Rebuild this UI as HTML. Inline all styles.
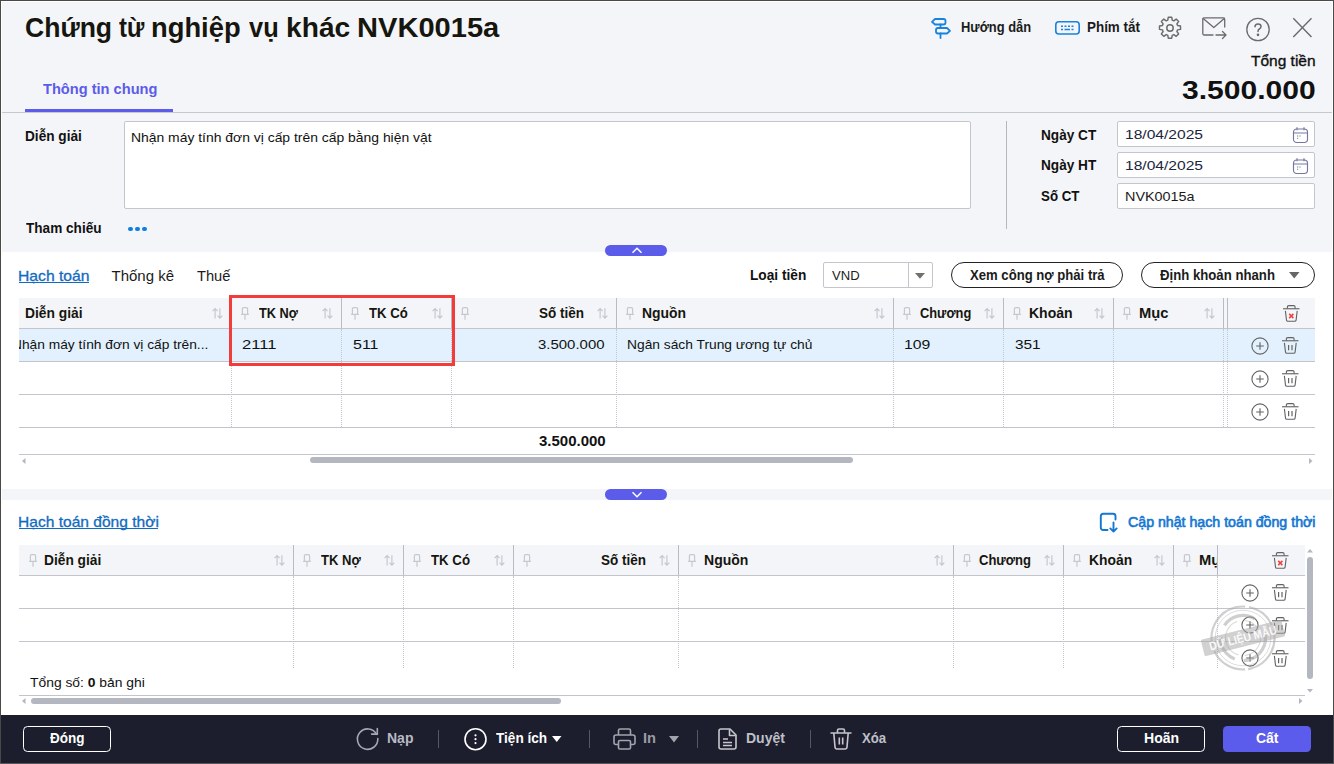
<!DOCTYPE html><html><head><meta charset="utf-8"><title>Chứng từ nghiệp vụ khác</title><style>
*{box-sizing:border-box;margin:0;padding:0}
html,body{width:1334px;height:764px;overflow:hidden;background:#f4f5f9;font-family:"Liberation Sans",sans-serif;color:#111}
.a{position:absolute;white-space:nowrap}
.t{position:absolute;white-space:nowrap;line-height:1}
.inp{position:absolute;background:#fff;border:1px solid #c4c6cc;border-radius:2px}
.vl{position:absolute;width:1px;background:#b9bbc3}
.vd{position:absolute;width:0;border-left:1px dotted #c3c5cc}
.pill{position:absolute;height:26px;border:1px solid #222;border-radius:13px;background:#fff}
svg{position:absolute;overflow:visible}
</style></head><body>
<div class="t" style="left:24.76px;top:14.80px;font-size:26.8px;color:#16160f;font-weight:700;transform:scaleX(0.9912);transform-origin:0 50%;">Chứng</div>
<div class="t" style="left:119.28px;top:14.80px;font-size:26.8px;color:#16160f;font-weight:700;transform:scaleX(0.8929);transform-origin:0 50%;">từ</div>
<div class="t" style="left:151.46px;top:14.80px;font-size:26.8px;color:#16160f;font-weight:700;transform:scaleX(1.0206);transform-origin:0 50%;">nghiệp</div>
<div class="t" style="left:249.01px;top:14.80px;font-size:26.8px;color:#16160f;font-weight:700;transform:scaleX(0.9487);transform-origin:0 50%;">vụ</div>
<div class="t" style="left:286.41px;top:14.80px;font-size:26.8px;color:#16160f;font-weight:700;transform:scaleX(1.0513);transform-origin:0 50%;">khác</div>
<div class="t" style="left:357.10px;top:14.80px;font-size:26.8px;color:#16160f;font-weight:700;transform:scaleX(1.0849);transform-origin:0 50%;">NVK0015a</div>
<svg style="left:931px;top:18px" width="20" height="21" viewBox="0 0 20 21" fill="none" stroke="#1783dc" stroke-width="1.800" stroke-linejoin="round" stroke-linecap="round"><path d="M4 1H12.500Q14.500 1 14.500 3V4.500Q14.500 6.500 12.500 6.500H4L1 3.800Z"/><path d="M7 10H16L19 12.800L16 15.500H7Q5 15.500 5 13.500V12Q5 10 7 10Z"/><path d="M9.500 6.500V10M9.500 15.500V20"/></svg>
<div class="t" style="left:960.66px;top:20.90px;font-size:13.8px;color:#1b1b1b;font-weight:700;transform:scaleX(0.9352);transform-origin:0 50%;">Hướng dẫn</div>
<svg style="left:1055px;top:21px" width="25" height="14" viewBox="0 0 25 14" fill="none" stroke="#1783dc" stroke-width="1.600"><rect x=".8" y=".8" width="23.400" height="12.200" rx="3"/><path d="M6 5.300H8M9.500 5.300H11.500M13 5.300H15M16.500 5.300H18.500M6 8.600H8M9.500 8.600H15M16.500 8.600H18.500" stroke-width="1.500"/></svg>
<div class="t" style="left:1086.53px;top:20.80px;font-size:13.8px;color:#1b1b1b;font-weight:700;transform:scaleX(0.9718);transform-origin:0 50%;">Phím tắt</div>
<svg style="left:1158px;top:16px" width="24" height="24" viewBox="0 0 24 24" fill="none" stroke="#6b6b6b" stroke-width="1.450" stroke-linejoin="round"><circle cx="12" cy="12" r="3.200"/><path d="M10.300 1.200h3.400l.5 2.900 1.600.7 2.400-1.700 2.400 2.400-1.700 2.400.7 1.600 2.900.5v3.400l-2.900.5-.7 1.600 1.700 2.400-2.400 2.400-2.400-1.700-1.600.7-.5 2.900h-3.400l-.5-2.900-1.600-.7-2.400 1.700-2.400-2.400 1.700-2.400-.7-1.600-2.900-.5v-3.400l2.900-.5.7-1.600-1.700-2.400 2.400-2.400 2.400 1.700 1.600-.7z"/></svg>
<svg style="left:1202px;top:17px" width="25" height="23" viewBox="0 0 25 23" fill="none" stroke="#6b6b6b" stroke-width="1.300" stroke-linejoin="round" stroke-linecap="round"><path d="M11 18H2.200Q.8 18 .8 16.600V2.200Q.8 .8 2.200 .8H21.300Q22.700 .8 22.700 2.200V10"/><path d="M1.200 1.500L11.800 10.500L22.300 1.500"/><path d="M14 18H24M20.500 14.500L24 18L20.500 21.500"/></svg>
<svg style="left:1246px;top:17.500px" width="24" height="24" viewBox="0 0 24 24" fill="none" stroke="#6b6b6b" stroke-width="1.300" stroke-linecap="round"><circle cx="12" cy="11.500" r="11.200"/><path d="M9 8.800Q9 6 12 6Q15 6 15 8.500Q15 10.100 13.300 11Q12 11.700 12 13.500" stroke-width="1.500"/><circle cx="12" cy="16.800" r=".7" fill="#6b6b6b"/></svg>
<svg style="left:1293px;top:18px" width="19" height="19" viewBox="0 0 19 19" fill="none" stroke="#6b6b6b" stroke-width="1.400"><path d="M.3 .3L18.500 19M18.500 .3L.3 19"/></svg>
<div class="t" style="left:1250.99px;top:53.40px;font-size:15.2px;color:#111;-webkit-text-stroke:0.35px #111;transform:scaleX(1.0202);transform-origin:0 50%;">Tổng tiền</div>
<div class="t" style="left:1181.98px;top:77.30px;font-size:26.4px;color:#111;font-weight:700;transform:scaleX(1.1382);transform-origin:0 50%;">3.500.000</div>
<div class="t" style="left:42.76px;top:81.00px;font-size:15px;color:#5c5cea;font-weight:700;transform:scaleX(0.9742);transform-origin:0 50%;">Thông tin chung</div>
<div class="a" style="left:25px;top:109px;width:148px;height:3px;background:#5c5cea;"></div>
<div class="a" style="left:2px;top:112px;width:1330px;height:1px;background:#c6c8cc;"></div>
<div class="t" style="left:25.04px;top:129.10px;font-size:14.2px;color:#111;font-weight:700;transform:scaleX(0.9607);transform-origin:0 50%;">Diễn giải</div>
<div class="inp" style="left:124px;top:121px;width:847px;height:88px"></div>
<div class="t" style="left:130.95px;top:130.70px;font-size:13.2px;color:#111;transform:scaleX(1.0546);transform-origin:0 50%;">Nhận máy tính đơn vị cấp trên cấp bằng hiện vật</div>
<div class="t" style="left:25.76px;top:220.60px;font-size:14.2px;color:#111;font-weight:700;transform:scaleX(0.9582);transform-origin:0 50%;">Tham chiếu</div>
<div class="a" style="left:128px;top:226.800px;width:4.500px;height:4.500px;border-radius:50%;background:#0f7ee0"></div>
<div class="a" style="left:135px;top:226.800px;width:4.500px;height:4.500px;border-radius:50%;background:#0f7ee0"></div>
<div class="a" style="left:142px;top:226.800px;width:4.500px;height:4.500px;border-radius:50%;background:#0f7ee0"></div>
<div class="a" style="left:1006px;top:121px;width:1px;height:108px;background:#b5b7bf;"></div>
<div class="t" style="left:1040.79px;top:127.60px;font-size:14.2px;color:#111;font-weight:700;transform:scaleX(0.9602);transform-origin:0 50%;">Ngày CT</div>
<div class="inp" style="left:1117px;top:121px;width:198px;height:26px"></div>
<div class="t" style="left:1124.52px;top:128.00px;font-size:13.2px;color:#20243c;transform:scaleX(1.1822);transform-origin:0 50%;">18/04/2025</div>
<svg style="left:1293px;top:127px" width="15" height="16" viewBox="0 0 15 16" fill="none" stroke="#7478a0" stroke-width="1.150"><rect x=".5" y="2" width="14" height="13.500" rx="3.200"/><path d="M.5 6H14.500M4 .3V3.200M11 .3V3.200"/><path d="M4 9H5.200M6.400 9H7.600M4 11.300H5.200" stroke-width="1.100"/></svg>
<div class="t" style="left:1040.79px;top:158.35px;font-size:14.2px;color:#111;font-weight:700;transform:scaleX(0.9602);transform-origin:0 50%;">Ngày HT</div>
<div class="inp" style="left:1117px;top:152px;width:198px;height:26px"></div>
<div class="t" style="left:1124.52px;top:158.75px;font-size:13.2px;color:#20243c;transform:scaleX(1.1822);transform-origin:0 50%;">18/04/2025</div>
<svg style="left:1293px;top:158px" width="15" height="16" viewBox="0 0 15 16" fill="none" stroke="#7478a0" stroke-width="1.150"><rect x=".5" y="2" width="14" height="13.500" rx="3.200"/><path d="M.5 6H14.500M4 .3V3.200M11 .3V3.200"/><path d="M4 9H5.200M6.400 9H7.600M4 11.300H5.200" stroke-width="1.100"/></svg>
<div class="t" style="left:1041.28px;top:189.10px;font-size:14.2px;color:#111;font-weight:700;transform:scaleX(0.9379);transform-origin:0 50%;">Số CT</div>
<div class="inp" style="left:1117px;top:183px;width:198px;height:26px"></div>
<div class="t" style="left:1124.61px;top:189.50px;font-size:13.2px;color:#1a1a1a;transform:scaleX(1.0916);transform-origin:0 50%;">NVK0015a</div>
<div class="a" style="left:2px;top:252px;width:1330px;height:237px;background:#fff;"></div>
<div class="a" style="left:605px;top:245px;width:62px;height:11px;border-radius:5.500px;background:#5c5cea"></div>
<svg style="left:627px;top:245.3px" width="20" height="11" viewBox="0 0 20 11" fill="none" stroke="#fff" stroke-width="1.500"><path d="M5.500 7.800L10 3.300L14.500 7.800"/></svg>
<div class="t" style="left:18.19px;top:267.50px;font-size:15px;color:#126bc0;-webkit-text-stroke:0.3px #126bc0;transform:scaleX(1.0460);transform-origin:0 50%;">Hạch toán</div>
<div class="a" style="left:18.7px;top:282px;width:70.3px;height:1px;background:#126bc0;"></div>
<div class="t" style="left:111.50px;top:267.50px;font-size:15px;color:#1b1b1b;">Thống kê</div>
<div class="t" style="left:196.76px;top:267.50px;font-size:15px;color:#1b1b1b;transform:scaleX(0.9778);transform-origin:0 50%;">Thuế</div>
<div class="t" style="left:750.04px;top:267.90px;font-size:14.2px;color:#111;font-weight:700;transform:scaleX(0.9646);transform-origin:0 50%;">Loại tiền</div>
<div class="inp" style="left:823px;top:262px;width:110px;height:26px"></div>
<div class="a" style="left:908px;top:263px;width:1px;height:24px;background:#c4c6cc;"></div>
<div class="t" style="left:832.00px;top:268.90px;font-size:13.2px;color:#222;transform:scaleX(0.9908);transform-origin:0 50%;">VND</div>
<svg style="left:915.2px;top:272.8px" width="10" height="5.8" viewBox="0 0 10 5.8"><path d="M0 0H10L5.0 5.8Z" fill="#707070"/></svg>
<div class="pill" style="left:951px;top:262px;width:172px"></div>
<div class="t" style="left:969.77px;top:267.90px;font-size:14.2px;color:#1b1b1b;font-weight:700;transform:scaleX(0.9244);transform-origin:0 50%;">Xem công nợ phải trả</div>
<div class="pill" style="left:1141px;top:262px;width:174px"></div>
<div class="t" style="left:1159.50px;top:267.90px;font-size:14.2px;color:#1b1b1b;font-weight:700;transform:scaleX(0.9289);transform-origin:0 50%;">Định khoản nhanh</div>
<svg style="left:1289px;top:272px" width="10.5" height="6.5" viewBox="0 0 10.5 6.5"><path d="M0 0H10.5L5.25 6.5Z" fill="#666"/></svg>
<div class="a" style="left:19px;top:329px;width:1296px;height:32px;background:#e2f1fd;"></div>
<div class="a" style="left:19px;top:361px;width:1296px;height:1px;background:#c3c5cc;"></div>
<div class="a" style="left:19px;top:394px;width:1296px;height:1px;background:#c3c5cc;"></div>
<div class="a" style="left:19px;top:427px;width:1296px;height:1px;background:#c3c5cc;"></div>
<div class="a" style="left:19px;top:298px;width:1296px;height:30px;background:#f4f5f9;"></div>
<div class="a" style="left:19px;top:328px;width:1296px;height:1px;background:#c3c5cc;"></div>
<svg style="left:212px;top:308.2px" width="11" height="11" viewBox="0 0 11 11" fill="none" stroke="#c3c6ce" stroke-width="1.150"><path d="M3.100 10.500V.6M.6 3.100L3.100 .6L5.600 3.100M7.900 .2V10.100M5.500 7.700L7.900 10.100L10.300 7.700"/></svg>
<div class="t" style="left:24.78px;top:305.90px;font-size:14.2px;color:#16160f;font-weight:700;transform:scaleX(0.9738);transform-origin:0 50%;">Diễn giải</div>
<div class="vl" style="left:231px;top:298px;height:30px"></div>
<div class="vd" style="left:231px;top:329px;height:98px"></div>
<svg style="left:241.4px;top:307.2px" width="8" height="13" viewBox="0 0 8 13" fill="none" stroke="#c6c8cf" stroke-width="1.200"><path d="M1.400 7.200V1.800Q1.400 .6 2.600 .6H5.400Q6.600 .6 6.600 1.800V7.200M.1 7.400H7.900M4 7.400V12.700"/></svg>
<svg style="left:322px;top:308.2px" width="11" height="11" viewBox="0 0 11 11" fill="none" stroke="#c3c6ce" stroke-width="1.150"><path d="M3.100 10.500V.6M.6 3.100L3.100 .6L5.600 3.100M7.900 .2V10.100M5.500 7.700L7.900 10.100L10.300 7.700"/></svg>
<div class="t" style="left:258.52px;top:305.90px;font-size:14.2px;color:#16160f;font-weight:700;transform:scaleX(0.9012);transform-origin:0 50%;">TK Nợ</div>
<div class="vl" style="left:341px;top:298px;height:30px"></div>
<div class="vd" style="left:341px;top:329px;height:98px"></div>
<svg style="left:351.4px;top:307.2px" width="8" height="13" viewBox="0 0 8 13" fill="none" stroke="#c6c8cf" stroke-width="1.200"><path d="M1.400 7.200V1.800Q1.400 .6 2.600 .6H5.400Q6.600 .6 6.600 1.800V7.200M.1 7.400H7.900M4 7.400V12.700"/></svg>
<svg style="left:432px;top:308.2px" width="11" height="11" viewBox="0 0 11 11" fill="none" stroke="#c3c6ce" stroke-width="1.150"><path d="M3.100 10.500V.6M.6 3.100L3.100 .6L5.600 3.100M7.900 .2V10.100M5.500 7.700L7.900 10.100L10.300 7.700"/></svg>
<div class="t" style="left:368.77px;top:305.90px;font-size:14.2px;color:#16160f;font-weight:700;transform:scaleX(0.9268);transform-origin:0 50%;">TK Có</div>
<div class="vl" style="left:451px;top:298px;height:30px"></div>
<div class="vd" style="left:451px;top:329px;height:98px"></div>
<svg style="left:461.4px;top:307.2px" width="8" height="13" viewBox="0 0 8 13" fill="none" stroke="#c6c8cf" stroke-width="1.200"><path d="M1.400 7.200V1.800Q1.400 .6 2.600 .6H5.400Q6.600 .6 6.600 1.800V7.200M.1 7.400H7.900M4 7.400V12.700"/></svg>
<svg style="left:597px;top:308.2px" width="11" height="11" viewBox="0 0 11 11" fill="none" stroke="#c3c6ce" stroke-width="1.150"><path d="M3.100 10.500V.6M.6 3.100L3.100 .6L5.600 3.100M7.900 .2V10.100M5.500 7.700L7.900 10.100L10.300 7.700"/></svg>
<div class="t" style="left:538.52px;top:305.90px;font-size:14.2px;color:#16160f;font-weight:700;transform:scaleX(0.9511);transform-origin:0 50%;">Số tiền</div>
<div class="vl" style="left:616px;top:298px;height:30px"></div>
<div class="vd" style="left:616px;top:329px;height:98px"></div>
<svg style="left:626.4px;top:307.2px" width="8" height="13" viewBox="0 0 8 13" fill="none" stroke="#c6c8cf" stroke-width="1.200"><path d="M1.400 7.200V1.800Q1.400 .6 2.600 .6H5.400Q6.600 .6 6.600 1.800V7.200M.1 7.400H7.900M4 7.400V12.700"/></svg>
<svg style="left:874px;top:308.2px" width="11" height="11" viewBox="0 0 11 11" fill="none" stroke="#c3c6ce" stroke-width="1.150"><path d="M3.100 10.500V.6M.6 3.100L3.100 .6L5.600 3.100M7.900 .2V10.100M5.500 7.700L7.900 10.100L10.300 7.700"/></svg>
<div class="t" style="left:642.27px;top:305.90px;font-size:14.2px;color:#16160f;font-weight:700;transform:scaleX(0.9826);transform-origin:0 50%;">Nguồn</div>
<div class="vl" style="left:893px;top:298px;height:30px"></div>
<div class="vd" style="left:893px;top:329px;height:98px"></div>
<svg style="left:903.4px;top:307.2px" width="8" height="13" viewBox="0 0 8 13" fill="none" stroke="#c6c8cf" stroke-width="1.200"><path d="M1.400 7.200V1.800Q1.400 .6 2.600 .6H5.400Q6.600 .6 6.600 1.800V7.200M.1 7.400H7.900M4 7.400V12.700"/></svg>
<svg style="left:984px;top:308.2px" width="11" height="11" viewBox="0 0 11 11" fill="none" stroke="#c3c6ce" stroke-width="1.150"><path d="M3.100 10.500V.6M.6 3.100L3.100 .6L5.600 3.100M7.900 .2V10.100M5.500 7.700L7.900 10.100L10.300 7.700"/></svg>
<div class="t" style="left:919.55px;top:305.90px;font-size:14.2px;color:#16160f;font-weight:700;transform:scaleX(0.9050);transform-origin:0 50%;">Chương</div>
<div class="vl" style="left:1003px;top:298px;height:30px"></div>
<div class="vd" style="left:1003px;top:329px;height:98px"></div>
<svg style="left:1013.4px;top:307.2px" width="8" height="13" viewBox="0 0 8 13" fill="none" stroke="#c6c8cf" stroke-width="1.200"><path d="M1.400 7.200V1.800Q1.400 .6 2.600 .6H5.400Q6.600 .6 6.600 1.800V7.200M.1 7.400H7.900M4 7.400V12.700"/></svg>
<svg style="left:1094px;top:308.2px" width="11" height="11" viewBox="0 0 11 11" fill="none" stroke="#c3c6ce" stroke-width="1.150"><path d="M3.100 10.500V.6M.6 3.100L3.100 .6L5.600 3.100M7.900 .2V10.100M5.500 7.700L7.900 10.100L10.300 7.700"/></svg>
<div class="t" style="left:1029.01px;top:305.90px;font-size:14.2px;color:#16160f;font-weight:700;transform:scaleX(0.9882);transform-origin:0 50%;">Khoản</div>
<div class="vl" style="left:1113px;top:298px;height:30px"></div>
<div class="vd" style="left:1113px;top:329px;height:98px"></div>
<svg style="left:1123.4px;top:307.2px" width="8" height="13" viewBox="0 0 8 13" fill="none" stroke="#c6c8cf" stroke-width="1.200"><path d="M1.400 7.200V1.800Q1.400 .6 2.600 .6H5.400Q6.600 .6 6.600 1.800V7.200M.1 7.400H7.900M4 7.400V12.700"/></svg>
<svg style="left:1204px;top:308.2px" width="11" height="11" viewBox="0 0 11 11" fill="none" stroke="#c3c6ce" stroke-width="1.150"><path d="M3.100 10.500V.6M.6 3.100L3.100 .6L5.600 3.100M7.900 .2V10.100M5.500 7.700L7.900 10.100L10.300 7.700"/></svg>
<div class="t" style="left:1138.96px;top:305.90px;font-size:14.2px;color:#16160f;font-weight:700;transform:scaleX(1.0370);transform-origin:0 50%;">Mục</div>
<div class="vl" style="left:1223px;top:298px;height:30px"></div><div class="vd" style="left:1223px;top:329px;height:98px"></div>
<div class="vl" style="left:1227px;top:298px;height:30px"></div><div class="vd" style="left:1227px;top:329px;height:98px"></div>
<svg style="left:1282.7px;top:305px" width="17" height="17" viewBox="0 0 17 17" fill="none" stroke="#636363" stroke-width="1.100"><path d="M0 3.700H16.500" stroke="#808080" stroke-width="1.400"/><path d="M4.400 3.500V1.900Q4.400 .6 5.800 .6H10.700Q12.100 .6 12.100 1.900V3.500M2.400 5.900L3.500 15.100Q3.650 16.300 4.900 16.300H11.700Q12.950 16.300 13.100 15.100L14.200 5.900"/><path d="M6.200 8.900L10.400 13.100M10.400 8.900L6.200 13.100" stroke="#f43b3b" stroke-width="1.500"/></svg>
<svg style="left:1250.9px;top:336.7px" width="18" height="18" viewBox="0 0 18 18" fill="none" stroke="#636363" stroke-width="1.100"><circle cx="9" cy="9" r="8.100"/><path d="M9 5.200V12.800M5.200 9H12.800"/></svg>
<svg style="left:1281.6px;top:337.1px" width="17" height="17" viewBox="0 0 17 17" fill="none" stroke="#636363" stroke-width="1.100"><path d="M0 3.700H16.500" stroke="#808080" stroke-width="1.400"/><path d="M4.400 3.500V1.900Q4.400 .6 5.800 .6H10.700Q12.100 .6 12.100 1.900V3.500M2.400 5.900L3.500 15.100Q3.650 16.300 4.900 16.300H11.700Q12.950 16.300 13.100 15.100L14.200 5.900"/><path d="M6.600 8V13.200M10 8V13.200" stroke-width="1.200"/></svg>
<svg style="left:1250.9px;top:369.7px" width="18" height="18" viewBox="0 0 18 18" fill="none" stroke="#636363" stroke-width="1.100"><circle cx="9" cy="9" r="8.100"/><path d="M9 5.200V12.800M5.200 9H12.800"/></svg>
<svg style="left:1281.6px;top:370.1px" width="17" height="17" viewBox="0 0 17 17" fill="none" stroke="#636363" stroke-width="1.100"><path d="M0 3.700H16.500" stroke="#808080" stroke-width="1.400"/><path d="M4.400 3.500V1.900Q4.400 .6 5.800 .6H10.700Q12.100 .6 12.100 1.900V3.500M2.400 5.900L3.500 15.100Q3.650 16.300 4.900 16.300H11.700Q12.950 16.300 13.100 15.100L14.200 5.900"/><path d="M6.600 8V13.200M10 8V13.200" stroke-width="1.200"/></svg>
<svg style="left:1250.9px;top:402.7px" width="18" height="18" viewBox="0 0 18 18" fill="none" stroke="#636363" stroke-width="1.100"><circle cx="9" cy="9" r="8.100"/><path d="M9 5.200V12.800M5.200 9H12.800"/></svg>
<svg style="left:1281.6px;top:403.1px" width="17" height="17" viewBox="0 0 17 17" fill="none" stroke="#636363" stroke-width="1.100"><path d="M0 3.700H16.500" stroke="#808080" stroke-width="1.400"/><path d="M4.400 3.500V1.900Q4.400 .6 5.800 .6H10.700Q12.100 .6 12.100 1.900V3.500M2.400 5.900L3.500 15.100Q3.650 16.300 4.900 16.300H11.700Q12.950 16.300 13.100 15.100L14.200 5.900"/><path d="M6.600 8V13.200M10 8V13.200" stroke-width="1.200"/></svg>
<div class="a" style="left:19px;top:329px;width:211px;height:32px;overflow:hidden"><div class="t" style="left:-7.04px;top:9.10px;font-size:13.2px;color:#111;transform:scaleX(1.0430);transform-origin:0 50%;">Nhận máy tính đơn vị cấp trên...</div></div>
<div class="t" style="left:242.06px;top:338.10px;font-size:13.2px;color:#111;transform:scaleX(1.2596);transform-origin:0 50%;">2111</div>
<div class="t" style="left:352.89px;top:338.10px;font-size:13.2px;color:#111;transform:scaleX(1.2125);transform-origin:0 50%;">511</div>
<div class="t" style="left:537.93px;top:338.10px;font-size:13.2px;color:#111;transform:scaleX(1.1342);transform-origin:0 50%;">3.500.000</div>
<div class="t" style="left:626.70px;top:338.10px;font-size:13.2px;color:#111;transform:scaleX(1.0456);transform-origin:0 50%;">Ngân sách Trung ương tự chủ</div>
<div class="t" style="left:904.30px;top:338.10px;font-size:13.2px;color:#111;transform:scaleX(1.1951);transform-origin:0 50%;">109</div>
<div class="t" style="left:1014.92px;top:338.10px;font-size:13.2px;color:#111;transform:scaleX(1.1667);transform-origin:0 50%;">351</div>
<div class="t" style="left:538.74px;top:433.60px;font-size:14.2px;color:#111;font-weight:700;transform:scaleX(1.0562);transform-origin:0 50%;">3.500.000</div>
<div class="a" style="left:19px;top:454px;width:1296px;height:1px;background:#c3c5cc;"></div>
<div class="a" style="left:310px;top:457px;width:543px;height:6px;background:#b4b7c0;border-radius:3px"></div>
<svg style="left:22px;top:457.5px" width="3.5" height="6" viewBox="0 0 3.5 6"><path d="M3.5 0V6L0 3.0Z" fill="#b4b7c0"/></svg>
<svg style="left:1308.5px;top:457.5px" width="3.5" height="6" viewBox="0 0 3.5 6"><path d="M0 0V6L3.5 3.0Z" fill="#b4b7c0"/></svg>
<div class="a" style="left:228.800px;top:295px;width:226px;height:70.500px;border:3px solid #f23c3c"></div>
<div class="a" style="left:2px;top:500px;width:1330px;height:215px;background:#fff;"></div>
<div class="a" style="left:605px;top:489px;width:62px;height:11px;border-radius:5.500px;background:#5c5cea"></div>
<svg style="left:627px;top:489.3px" width="20" height="11" viewBox="0 0 20 11" fill="none" stroke="#fff" stroke-width="1.500"><path d="M5.500 3.200L10 7.700L14.500 3.200"/></svg>
<div class="t" style="left:18.20px;top:514.00px;font-size:15px;color:#126bc0;-webkit-text-stroke:0.3px #126bc0;transform:scaleX(1.0375);transform-origin:0 50%;">Hạch toán đồng thời</div>
<div class="a" style="left:18.7px;top:528px;width:139.5px;height:1px;background:#126bc0;"></div>
<svg style="left:1100px;top:512.500px" width="18" height="20" viewBox="0 0 18 20" fill="none" stroke="#1477d2" stroke-width="1.900" stroke-linecap="round" stroke-linejoin="round"><path d="M7.500 17H3.300Q.8 17 .8 14.500V3.300Q.8 .8 3.300 .8H13Q15.500 .8 15.500 3.300V6.500"/><path d="M13.500 9.500V18.500M10.300 15.400L13.500 18.600L16.700 15.400"/></svg>
<div class="t" style="left:1127.98px;top:515.60px;font-size:13.8px;color:#1477d2;-webkit-text-stroke:0.6px #1477d2;transform:scaleX(1.0277);transform-origin:0 50%;">Cập nhật hạch toán đồng thời</div>
<div class="a" style="left:19px;top:608px;width:1286px;height:1px;background:#c3c5cc;"></div>
<div class="a" style="left:19px;top:641px;width:1286px;height:1px;background:#c3c5cc;"></div>
<div class="a" style="left:19px;top:545px;width:1286px;height:30px;background:#f4f5f9;"></div>
<div class="a" style="left:19px;top:575px;width:1286px;height:1px;background:#c3c5cc;"></div>
<svg style="left:28.7px;top:554.2px" width="8" height="13" viewBox="0 0 8 13" fill="none" stroke="#c6c8cf" stroke-width="1.200"><path d="M1.400 7.200V1.800Q1.400 .6 2.600 .6H5.400Q6.600 .6 6.600 1.800V7.200M.1 7.400H7.900M4 7.400V12.700"/></svg>
<svg style="left:274px;top:555.2px" width="11" height="11" viewBox="0 0 11 11" fill="none" stroke="#c3c6ce" stroke-width="1.150"><path d="M3.100 10.500V.6M.6 3.100L3.100 .6L5.600 3.100M7.900 .2V10.100M5.500 7.700L7.900 10.100L10.300 7.700"/></svg>
<div class="t" style="left:44.03px;top:552.90px;font-size:14.2px;color:#16160f;font-weight:700;transform:scaleX(0.9694);transform-origin:0 50%;">Diễn giải</div>
<div class="vl" style="left:293px;top:545px;height:30px"></div>
<div class="vd" style="left:293px;top:576px;height:92px"></div>
<svg style="left:303.4px;top:554.2px" width="8" height="13" viewBox="0 0 8 13" fill="none" stroke="#c6c8cf" stroke-width="1.200"><path d="M1.400 7.200V1.800Q1.400 .6 2.600 .6H5.400Q6.600 .6 6.600 1.800V7.200M.1 7.400H7.900M4 7.400V12.700"/></svg>
<svg style="left:384px;top:555.2px" width="11" height="11" viewBox="0 0 11 11" fill="none" stroke="#c3c6ce" stroke-width="1.150"><path d="M3.100 10.500V.6M.6 3.100L3.100 .6L5.600 3.100M7.900 .2V10.100M5.500 7.700L7.900 10.100L10.300 7.700"/></svg>
<div class="t" style="left:320.52px;top:552.90px;font-size:14.2px;color:#16160f;font-weight:700;transform:scaleX(0.9186);transform-origin:0 50%;">TK Nợ</div>
<div class="vl" style="left:403px;top:545px;height:30px"></div>
<div class="vd" style="left:403px;top:576px;height:92px"></div>
<svg style="left:413.4px;top:554.2px" width="8" height="13" viewBox="0 0 8 13" fill="none" stroke="#c6c8cf" stroke-width="1.200"><path d="M1.400 7.200V1.800Q1.400 .6 2.600 .6H5.400Q6.600 .6 6.600 1.800V7.200M.1 7.400H7.900M4 7.400V12.700"/></svg>
<svg style="left:494px;top:555.2px" width="11" height="11" viewBox="0 0 11 11" fill="none" stroke="#c3c6ce" stroke-width="1.150"><path d="M3.100 10.500V.6M.6 3.100L3.100 .6L5.600 3.100M7.900 .2V10.100M5.500 7.700L7.900 10.100L10.300 7.700"/></svg>
<div class="t" style="left:430.52px;top:552.90px;font-size:14.2px;color:#16160f;font-weight:700;transform:scaleX(0.9329);transform-origin:0 50%;">TK Có</div>
<div class="vl" style="left:513px;top:545px;height:30px"></div>
<div class="vd" style="left:513px;top:576px;height:92px"></div>
<svg style="left:523.4px;top:554.2px" width="8" height="13" viewBox="0 0 8 13" fill="none" stroke="#c6c8cf" stroke-width="1.200"><path d="M1.400 7.200V1.800Q1.400 .6 2.600 .6H5.400Q6.600 .6 6.600 1.800V7.200M.1 7.400H7.900M4 7.400V12.700"/></svg>
<svg style="left:659px;top:555.2px" width="11" height="11" viewBox="0 0 11 11" fill="none" stroke="#c3c6ce" stroke-width="1.150"><path d="M3.100 10.500V.6M.6 3.100L3.100 .6L5.600 3.100M7.900 .2V10.100M5.500 7.700L7.900 10.100L10.300 7.700"/></svg>
<div class="t" style="left:600.52px;top:552.90px;font-size:14.2px;color:#16160f;font-weight:700;transform:scaleX(0.9511);transform-origin:0 50%;">Số tiền</div>
<div class="vl" style="left:678px;top:545px;height:30px"></div>
<div class="vd" style="left:678px;top:576px;height:92px"></div>
<svg style="left:688.4px;top:554.2px" width="8" height="13" viewBox="0 0 8 13" fill="none" stroke="#c6c8cf" stroke-width="1.200"><path d="M1.400 7.200V1.800Q1.400 .6 2.600 .6H5.400Q6.600 .6 6.600 1.800V7.200M.1 7.400H7.900M4 7.400V12.700"/></svg>
<svg style="left:934px;top:555.2px" width="11" height="11" viewBox="0 0 11 11" fill="none" stroke="#c3c6ce" stroke-width="1.150"><path d="M3.100 10.500V.6M.6 3.100L3.100 .6L5.600 3.100M7.900 .2V10.100M5.500 7.700L7.900 10.100L10.300 7.700"/></svg>
<div class="t" style="left:704.01px;top:552.90px;font-size:14.2px;color:#16160f;font-weight:700;transform:scaleX(0.9884);transform-origin:0 50%;">Nguồn</div>
<div class="vl" style="left:953px;top:545px;height:30px"></div>
<div class="vd" style="left:953px;top:576px;height:92px"></div>
<svg style="left:963.4px;top:554.2px" width="8" height="13" viewBox="0 0 8 13" fill="none" stroke="#c6c8cf" stroke-width="1.200"><path d="M1.400 7.200V1.800Q1.400 .6 2.600 .6H5.400Q6.600 .6 6.600 1.800V7.200M.1 7.400H7.900M4 7.400V12.700"/></svg>
<svg style="left:1044px;top:555.2px" width="11" height="11" viewBox="0 0 11 11" fill="none" stroke="#c3c6ce" stroke-width="1.150"><path d="M3.100 10.500V.6M.6 3.100L3.100 .6L5.600 3.100M7.900 .2V10.100M5.500 7.700L7.900 10.100L10.300 7.700"/></svg>
<div class="t" style="left:979.29px;top:552.90px;font-size:14.2px;color:#16160f;font-weight:700;transform:scaleX(0.9186);transform-origin:0 50%;">Chương</div>
<div class="vl" style="left:1063px;top:545px;height:30px"></div>
<div class="vd" style="left:1063px;top:576px;height:92px"></div>
<svg style="left:1073.4px;top:554.2px" width="8" height="13" viewBox="0 0 8 13" fill="none" stroke="#c6c8cf" stroke-width="1.200"><path d="M1.400 7.200V1.800Q1.400 .6 2.600 .6H5.400Q6.600 .6 6.600 1.800V7.200M.1 7.400H7.900M4 7.400V12.700"/></svg>
<svg style="left:1154px;top:555.2px" width="11" height="11" viewBox="0 0 11 11" fill="none" stroke="#c3c6ce" stroke-width="1.150"><path d="M3.100 10.500V.6M.6 3.100L3.100 .6L5.600 3.100M7.900 .2V10.100M5.500 7.700L7.900 10.100L10.300 7.700"/></svg>
<div class="t" style="left:1089.02px;top:552.90px;font-size:14.2px;color:#16160f;font-weight:700;transform:scaleX(0.9763);transform-origin:0 50%;">Khoản</div>
<div class="vl" style="left:1173px;top:545px;height:30px"></div><div class="vd" style="left:1173px;top:576px;height:92px"></div>
<svg style="left:1183.4px;top:554.2px" width="8" height="13" viewBox="0 0 8 13" fill="none" stroke="#c6c8cf" stroke-width="1.200"><path d="M1.400 7.200V1.800Q1.400 .6 2.600 .6H5.400Q6.600 .6 6.600 1.800V7.200M.1 7.400H7.900M4 7.400V12.700"/></svg>
<div class="a" style="left:1195px;top:545px;width:22px;height:30px;overflow:hidden"><div class="t" style="left:3.96px;top:7.90px;font-size:14.2px;color:#16160f;font-weight:700;transform:scaleX(1.0370);transform-origin:0 50%;">Mục</div></div>
<div class="vl" style="left:1217px;top:545px;height:30px"></div><div class="vd" style="left:1217px;top:576px;height:92px"></div>
<svg style="left:1272.3px;top:552px" width="17" height="17" viewBox="0 0 17 17" fill="none" stroke="#636363" stroke-width="1.100"><path d="M0 3.700H16.500" stroke="#808080" stroke-width="1.400"/><path d="M4.400 3.500V1.900Q4.400 .6 5.800 .6H10.700Q12.100 .6 12.100 1.900V3.500M2.400 5.900L3.500 15.100Q3.650 16.300 4.900 16.300H11.700Q12.950 16.300 13.100 15.100L14.200 5.900"/><path d="M6.200 8.900L10.400 13.100M10.400 8.900L6.200 13.100" stroke="#f43b3b" stroke-width="1.500"/></svg>
<svg style="left:1240.5px;top:583.6999999999999px" width="18" height="18" viewBox="0 0 18 18" fill="none" stroke="#636363" stroke-width="1.100"><circle cx="9" cy="9" r="8.100"/><path d="M9 5.200V12.800M5.200 9H12.800"/></svg>
<svg style="left:1271.5px;top:584.1999999999999px" width="17" height="17" viewBox="0 0 17 17" fill="none" stroke="#636363" stroke-width="1.100"><path d="M0 3.700H16.500" stroke="#808080" stroke-width="1.400"/><path d="M4.400 3.500V1.900Q4.400 .6 5.800 .6H10.700Q12.100 .6 12.100 1.900V3.500M2.400 5.900L3.500 15.100Q3.650 16.300 4.900 16.300H11.700Q12.950 16.300 13.100 15.100L14.200 5.900"/><path d="M6.600 8V13.200M10 8V13.200" stroke-width="1.200"/></svg>
<svg style="left:1240.5px;top:616.3px" width="18" height="18" viewBox="0 0 18 18" fill="none" stroke="#636363" stroke-width="1.100"><circle cx="9" cy="9" r="8.100"/><path d="M9 5.200V12.800M5.200 9H12.800"/></svg>
<svg style="left:1271.5px;top:616.8px" width="17" height="17" viewBox="0 0 17 17" fill="none" stroke="#636363" stroke-width="1.100"><path d="M0 3.700H16.500" stroke="#808080" stroke-width="1.400"/><path d="M4.400 3.500V1.900Q4.400 .6 5.800 .6H10.700Q12.100 .6 12.100 1.900V3.500M2.400 5.900L3.500 15.100Q3.650 16.300 4.900 16.300H11.700Q12.950 16.300 13.100 15.100L14.200 5.900"/><path d="M6.600 8V13.200M10 8V13.200" stroke-width="1.200"/></svg>
<svg style="left:1240.5px;top:649.0px" width="18" height="18" viewBox="0 0 18 18" fill="none" stroke="#636363" stroke-width="1.100"><circle cx="9" cy="9" r="8.100"/><path d="M9 5.200V12.800M5.200 9H12.800"/></svg>
<svg style="left:1271.5px;top:649.5px" width="17" height="17" viewBox="0 0 17 17" fill="none" stroke="#636363" stroke-width="1.100"><path d="M0 3.700H16.500" stroke="#808080" stroke-width="1.400"/><path d="M4.400 3.500V1.900Q4.400 .6 5.800 .6H10.700Q12.100 .6 12.100 1.900V3.500M2.400 5.900L3.500 15.100Q3.650 16.300 4.900 16.300H11.700Q12.950 16.300 13.100 15.100L14.200 5.900"/><path d="M6.600 8V13.200M10 8V13.200" stroke-width="1.200"/></svg>
<div class="t" style="left:30.24px;top:675.90px;font-size:13.2px;color:#111;transform:scaleX(1.0508);transform-origin:0 50%;">Tổng số: <b>0</b> bản ghi</div>
<div class="a" style="left:19px;top:695px;width:1286px;height:1px;background:#c3c5cc;"></div>
<div class="a" style="left:31px;top:698px;width:530px;height:6px;background:#b4b7c0;border-radius:3px"></div>
<svg style="left:22px;top:698px" width="3.5" height="6" viewBox="0 0 3.5 6"><path d="M3.5 0V6L0 3.0Z" fill="#b4b7c0"/></svg>
<svg style="left:1298.5px;top:698px" width="3.5" height="6" viewBox="0 0 3.5 6"><path d="M0 0V6L3.5 3.0Z" fill="#b4b7c0"/></svg>
<div class="a" style="left:1307px;top:557px;width:6px;height:122px;background:#b4b7c0;border-radius:3px"></div>
<svg style="left:1307px;top:548.5px" width="6" height="3.5" viewBox="0 0 6 3.5"><path d="M0 3.5H6L3.0 0Z" fill="#b4b7c0"/></svg>
<svg style="left:1307px;top:689px" width="6" height="3.5" viewBox="0 0 6 3.5"><path d="M0 0H6L3.0 3.5Z" fill="#b4b7c0"/></svg>
<svg style="left:1193px;top:597px" width="100" height="82" viewBox="-50 -41 100 82"><g fill="none" stroke="#a8a8a8" stroke-opacity=".55" transform="rotate(-14)"><circle r="31.500" stroke-width="2.200" stroke-dasharray="52 3 38 5 60 4 30 6"/><circle r="27.800" stroke-width=".8" stroke-opacity=".45"/><circle r="22.500" stroke-width="3.200" stroke-dasharray="40 9 28 12 34 18.400"/><circle r="17.500" stroke-width="1" stroke-opacity=".45" stroke-dasharray="30 6 44 8 16 6"/><rect x="-41.500" y="-8.500" width="83" height="17" rx="1.500" fill="#a6a6a6" fill-opacity=".52" stroke="none"/><text x="0" y="4.200" text-anchor="middle" textLength="69" lengthAdjust="spacingAndGlyphs" font-family="Liberation Sans, sans-serif" font-weight="700" font-size="12" fill="#fff" fill-opacity=".9" stroke="none">DỮ LIỆU MẪU</text></g></svg>
<div class="a" style="left:1px;top:715px;width:1332px;height:48px;background:#1c1e2e;"></div>
<div class="a" style="left:23px;top:726px;width:88px;height:26px;border:1.300px solid #fff;border-radius:4.500px"></div>
<div class="t" style="left:50.20px;top:731.00px;font-size:14px;color:#fff;font-weight:700;transform:scaleX(0.9640);transform-origin:0 50%;">Đóng</div>
<svg style="left:356px;top:728px" width="23" height="22" viewBox="0 0 23 22" fill="none" stroke="#a6a8b4" stroke-width="1.600" stroke-linecap="round"><path d="M21.800 10.600A10.200 10.200 0 1 1 20.600 6.300"/><path d="M21.300 .5V6.100H15.600" stroke-linejoin="miter"/></svg>
<div class="t" style="left:387.00px;top:731.00px;font-size:14px;color:#b9bac3;font-weight:700;">Nạp</div>
<div class="a" style="left:438.2px;top:730px;width:1.2px;height:18px;background:#55576a;"></div>
<div class="a" style="left:588.7px;top:730px;width:1.2px;height:18px;background:#55576a;"></div>
<div class="a" style="left:697.3px;top:730px;width:1.2px;height:18px;background:#55576a;"></div>
<div class="a" style="left:810.2px;top:730px;width:1.2px;height:18px;background:#55576a;"></div>
<svg style="left:464px;top:728px" width="23" height="23" viewBox="0 0 23 23" fill="none" stroke="#fff" stroke-width="1.600"><circle cx="11.500" cy="11.200" r="10.500"/><g fill="#fff" stroke="none"><circle cx="11.500" cy="7.300" r="1.100"/><circle cx="11.500" cy="11.200" r="1.100"/><circle cx="11.500" cy="15.100" r="1.100"/></g></svg>
<div class="t" style="left:495.56px;top:730.80px;font-size:14px;color:#fff;font-weight:700;transform:scaleX(0.9709);transform-origin:0 50%;">Tiện ích</div>
<svg style="left:552px;top:736px" width="9.5" height="6" viewBox="0 0 9.5 6"><path d="M0 0H9.5L4.75 6Z" fill="#fff"/></svg>
<svg style="left:613px;top:728px" width="23" height="22" viewBox="0 0 23 22" fill="none" stroke="#a3a4ab" stroke-width="1.600" stroke-linejoin="round"><path d="M5.500 7V2.500Q5.500 1 7 1H16Q17.500 1 17.500 2.500V7"/><path d="M5.500 16.500H3Q1 16.500 1 14.500V9Q1 7 3 7H20Q22 7 22 9V14.500Q22 16.500 20 16.500H17.500"/><rect x="5.500" y="12.500" width="12" height="8.500" rx="1.300"/></svg>
<div class="t" style="left:643.45px;top:730.80px;font-size:14px;color:#9a9ba3;font-weight:700;transform:scaleX(1.0476);transform-origin:0 50%;">In</div>
<svg style="left:669.3px;top:736px" width="10" height="6.5" viewBox="0 0 10 6.5"><path d="M0 0H10L5.0 6.5Z" fill="#a3a4ab"/></svg>
<svg style="left:718px;top:728px" width="19" height="22" viewBox="0 0 19 22" fill="none" stroke="#c6c7cc" stroke-width="1.600" stroke-linejoin="round"><path d="M3 1H12L18 7V19Q18 21 16 21H3Q1 21 1 19V3Q1 1 3 1Z"/><path d="M11.500 1.500V7.500H17.500"/><path d="M5 11H10M5 14.500H14M5 17.500H14" stroke-width="1.400"/></svg>
<div class="t" style="left:745.60px;top:730.80px;font-size:14px;color:#bfc0c7;font-weight:700;transform:scaleX(1.0013);transform-origin:0 50%;">Duyệt</div>
<svg style="left:830px;top:728px" width="22" height="22" viewBox="0 0 22 22" fill="none" stroke="#c6c7cc" stroke-width="1.600" stroke-linejoin="round"><path d="M.5 5H21.500M7.500 5V2.500Q7.500 1 9 1H13Q14.500 1 14.500 2.500V5M3.800 5L5 19Q5.200 21 7 21H15Q16.800 21 17 19L18.200 5M9.300 9.500V16.500M12.700 9.500V16.500"/></svg>
<div class="t" style="left:861.76px;top:730.80px;font-size:14px;color:#bfc0c7;font-weight:700;transform:scaleX(0.9412);transform-origin:0 50%;">Xóa</div>
<div class="a" style="left:1117px;top:726px;width:88px;height:26px;border:1.300px solid #fff;border-radius:4.500px"></div>
<div class="t" style="left:1143.70px;top:730.80px;font-size:14px;color:#fff;font-weight:700;transform:scaleX(1.0015);transform-origin:0 50%;">Hoãn</div>
<div class="a" style="left:1223px;top:726px;width:88px;height:26px;background:#5c5cec;border-radius:4.500px"></div>
<div class="t" style="left:1255.60px;top:730.80px;font-size:14px;color:#fff;font-weight:700;transform:scaleX(0.9955);transform-origin:0 50%;">Cất</div>
<div class="a" style="left:0px;top:0px;width:1334px;height:1px;background:#4b4947;"></div>
<div class="a" style="left:0px;top:0px;width:1px;height:764px;background:#4b4947;"></div>
<div class="a" style="left:1333px;top:0px;width:1px;height:764px;background:#4b4947;"></div>
<div class="a" style="left:0px;top:763px;width:1334px;height:1px;background:#5a5856;"></div>
<div class="a" style="left:1px;top:1px;width:1332px;height:1px;background:#fff;"></div>
<div class="a" style="left:1px;top:1px;width:1px;height:714px;background:#fff;"></div>
<div class="a" style="left:1332px;top:1px;width:1px;height:714px;background:#fff;"></div>
</body></html>
